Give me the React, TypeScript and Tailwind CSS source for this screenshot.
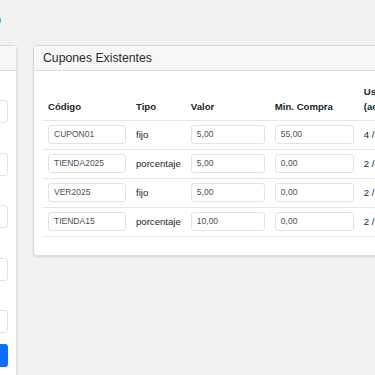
const coupons = [
  { code: "CUPON01", type: "fijo", value: "5,00", min: "55,00", uses: "4 / 10" },
  { code: "TIENDA2025", type: "porcentaje", value: "5,00", min: "0,00", uses: "2 / 50" },
  { code: "VER2025", type: "fijo", value: "5,00", min: "0,00", uses: "2 / 20" },
  { code: "TIENDA15", type: "porcentaje", value: "10,00", min: "0,00", uses: "2 / 15" },
];

const formFields = ["Código", "Tipo", "Valor", "Mínimo de compra", "Usos máximos"];

const App = () => {
  return (
    <div className="w-[375px] h-[375px] overflow-hidden bg-[#f2f2f2] font-['Liberation_Sans',Arial,sans-serif]">
      <div className="ml-[-283px] w-[800px] pt-[11px]">
        {/* Back link */}
        <div className="w-[284px] text-right text-[12.25px] leading-[18px] text-[#0d6efd]">
          Volver al inicio
        </div>

        <div className="mt-[16px] flex items-start gap-[16px]">
          {/* New coupon form */}
          <div className="w-[300px] h-[400px] shrink-0 rounded-[4px] border border-[#dcdcdc] bg-white shadow-sm">
            <div className="h-[25px] border-b border-[#dcdcdc] bg-[#f7f7f7] px-[9px] text-[12.25px] leading-[23px] text-[#333]">
              Nuevo Cupón
            </div>
            <div className="flex flex-col pl-[9px] pr-[8px] pt-[11px]">
              {formFields.map((label) => (
                <div key={label} className="mb-[11.5px] flex flex-col">
                  <label className="mb-[3px] text-[9.6px] leading-[15px] text-[#212529]">{label}</label>
                  <div className="h-[23px] rounded-[3px] border border-[#e3e3e3] bg-white" />
                </div>
              ))}
              <button className="-mt-[1px] h-[23px] rounded-[3px] bg-[#0d6efd] text-[9.6px] text-white">
                Crear cupón
              </button>
            </div>
          </div>

          {/* Existing coupons */}
          <div className="w-[430px] shrink-0 rounded-[4px] border border-[#dcdcdc] bg-white shadow-sm">
            <div className="h-[25px] border-b border-[#dcdcdc] bg-[#f7f7f7] px-[9px] text-[12.25px] leading-[24px] text-[#2b2b2b]">
              Cupones Existentes
            </div>
            <div className="px-[9px] pt-[9px] pb-[18px]">
              <table className="border-collapse text-left text-[9.6px] leading-[15px] text-[#212529]">
                <thead>
                  <tr className="border-b border-[#e6e6e6]">
                    <th className="px-[5px] pt-[4px] pb-[6px] align-bottom font-bold">Código</th>
                    <th className="px-[5px] pt-[4px] pb-[6px] align-bottom font-bold">Tipo</th>
                    <th className="px-[5px] pt-[4px] pb-[6px] align-bottom font-bold">Valor</th>
                    <th className="px-[5px] pt-[4px] pb-[6px] align-bottom font-bold">Min. Compra</th>
                    <th className="px-[5px] pt-[4px] pb-[6px] align-bottom font-bold">
                      Usos
                      <br />
                      (actual/máx)
                    </th>
                  </tr>
                </thead>
                <tbody>
                  {coupons.map((c) => (
                    <tr key={c.code} className="border-b border-[#e6e6e6]">
                      <td className="px-[5px] pt-[4px] pb-[5px] align-middle">
                        <div className="h-[19px] w-[78px] rounded-[3px] border border-[#e3e3e3] pl-[5px] text-[8.5px] leading-[17px] text-[#495057]">
                          {c.code}
                        </div>
                      </td>
                      <td className="px-[5px] pt-[4px] pb-[5px] align-middle whitespace-nowrap">{c.type}</td>
                      <td className="px-[5px] pt-[4px] pb-[5px] align-middle">
                        <div className="h-[19px] w-[74px] rounded-[3px] border border-[#e3e3e3] pl-[5px] text-[8.5px] leading-[17px] text-[#495057]">
                          {c.value}
                        </div>
                      </td>
                      <td className="px-[5px] pt-[4px] pb-[5px] align-middle">
                        <div className="h-[19px] w-[79px] rounded-[3px] border border-[#e3e3e3] pl-[5px] text-[8.5px] leading-[17px] text-[#495057]">
                          {c.min}
                        </div>
                      </td>
                      <td className="px-[5px] pt-[4px] pb-[5px] align-middle whitespace-nowrap">{c.uses}</td>
                    </tr>
                  ))}
                </tbody>
              </table>
            </div>
          </div>
        </div>
      </div>
    </div>
  );
};

export default App;
